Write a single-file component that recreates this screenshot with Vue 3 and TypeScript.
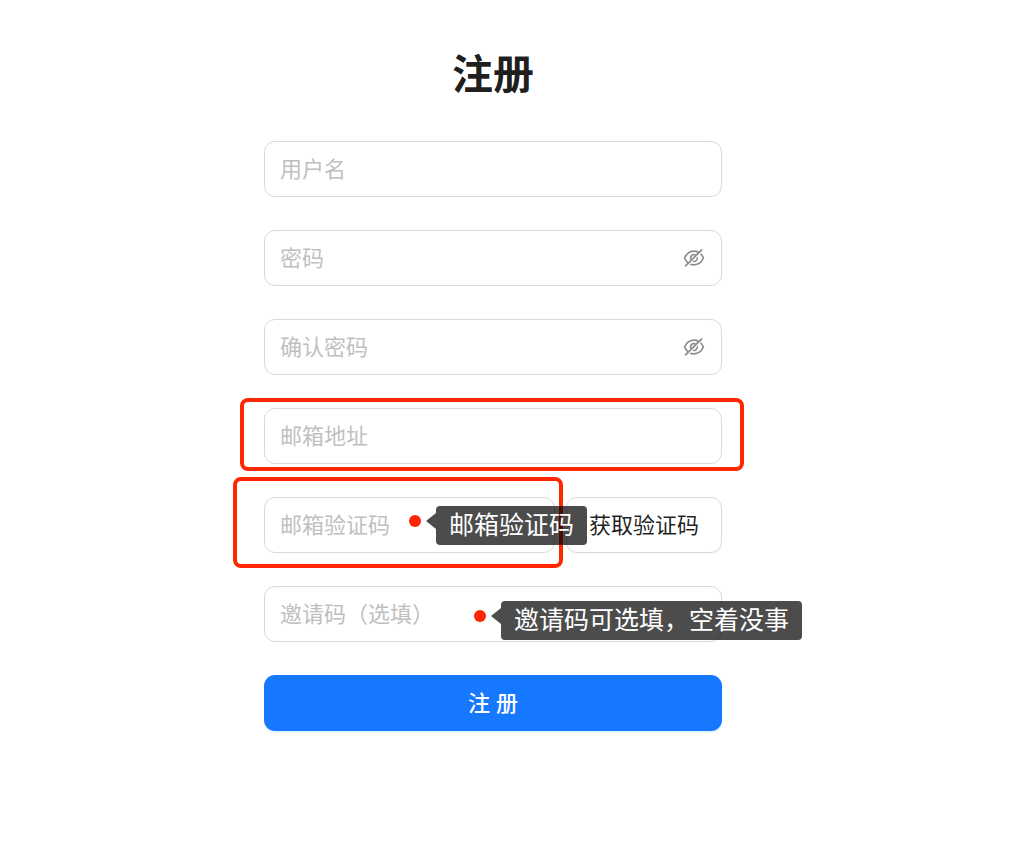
<script setup lang="ts">
import { reactive, ref } from 'vue'

const form = reactive({
  username: '',
  password: '',
  confirm: '',
  email: '',
  code: '',
  invite: '',
})

const passwordFields: { key: 'password' | 'confirm'; label: string }[] = [
  { key: 'password', label: '密码' },
  { key: 'confirm', label: '确认密码' },
]

const shown = ref({ password: false, confirm: false })
</script>

<template>
  <main class="page">
    <form class="form" @submit.prevent>
      <h1 class="title">注册</h1>

      <div class="row">
        <input v-model="form.username" class="field" type="text" placeholder="用户名" aria-label="用户名" />
      </div>

      <div v-for="f in passwordFields" :key="f.key" class="row field affix">
        <input
          v-model="form[f.key]"
          class="bare"
          :type="shown[f.key] ? 'text' : 'password'"
          :placeholder="f.label"
          :aria-label="f.label"
        />
        <button class="eye" type="button" aria-label="显示密码" @click="shown[f.key] = !shown[f.key]">
          <svg viewBox="0 0 1024 1024" fill="currentColor" aria-hidden="true">
            <path
              d="M942.2 486.2Q889.47 375.11 816.7 305l-50.88 50.88C807.31 395.53 843.45 447.4 874.7 512 791.5 684.2 673.4 766 512 766q-72.67 0-133.87-22.38L323 798.75Q408 838 512 838q288.3 0 430.2-300.3a60.29 60.29 0 000-51.5zm-63.57-320.64L836 122.88a8 8 0 00-11.32 0L715.31 232.2Q624.86 186 512 186q-288.3 0-430.2 300.3a60.3 60.3 0 000 51.5q56.69 119.4 136.5 191.41L112.48 835a8 8 0 000 11.31L155.17 889a8 8 0 0011.31 0l712.15-712.12a8 8 0 000-11.32zM149.3 512C232.6 339.8 350.7 258 512 258c54.54 0 104.13 9.36 149.12 28.39l-70.3 70.3a176 176 0 00-238.13 238.13l-83.42 83.42C223.1 637.49 183.3 582.28 149.3 512zm246.7 0a112.11 112.11 0 01146.2-106.69L401.31 546.2A112 112 0 01396 512z"
            />
            <path
              d="M508 624c-3.46 0-6.87-.16-10.25-.47l-52.82 52.82a176.09 176.09 0 00227.42-227.42l-52.82 52.82c.31 3.38.47 6.79.47 10.25a111.94 111.94 0 01-112 112z"
            />
          </svg>
        </button>
      </div>

      <div class="row">
        <input v-model="form.email" class="field" type="email" placeholder="邮箱地址" aria-label="邮箱地址" />
        <span class="frame frame-email"></span>
      </div>

      <div class="row split">
        <div class="row grow">
          <input v-model="form.code" class="field" type="text" placeholder="邮箱验证码" aria-label="邮箱验证码" />
          <span class="frame frame-code"></span>
        </div>
        <button class="field get-code" type="button">获取验证码</button>
        <div class="note note-code">
          <span class="dot"></span><span class="arrow"></span><span class="tip">邮箱验证码</span>
        </div>
      </div>

      <div class="row">
        <input v-model="form.invite" class="field" type="text" placeholder="邀请码（选填）" aria-label="邀请码（选填）" />
        <div class="note note-invite">
          <span class="dot"></span><span class="arrow"></span><span class="tip">邀请码可选填，空着没事</span>
        </div>
      </div>

      <button class="submit" type="submit">注 册</button>
    </form>
  </main>
</template>

<style>
body {
  margin: 0;
  background: #fff;
}
</style>

<style scoped>
.page,
.page * {
  box-sizing: border-box;
}

.page {
  display: flex;
  justify-content: center;
  padding: 45px 38px 44px 0;
  font-family: 'Liberation Sans', 'Noto Sans CJK SC', sans-serif;
  font-size: 22px;
  color: rgba(0, 0, 0, 0.88);
}

.form {
  display: flex;
  flex-direction: column;
  gap: 33px;
  width: 100%;
  max-width: 458px;
}

.title {
  margin: 0 0 3px;
  font-size: 41px;
  line-height: 60px;
  font-weight: 700;
  text-align: center;
}

.row {
  position: relative;
}

.field {
  display: block;
  width: 100%;
  height: 56px;
  padding: 2px 15px 0;
  border: 1px solid #d9d9d9;
  border-radius: 11px;
  background: #fff;
  font: inherit;
  color: inherit;
  outline: none;
}

.field:focus,
.field:focus-within {
  border-color: #1677ff;
}

.field::placeholder,
.bare::placeholder {
  color: #bfbfbf;
  opacity: 1;
}

.affix {
  display: flex;
  align-items: center;
  padding-top: 0;
}

.bare {
  flex: 1;
  min-width: 0;
  padding: 2px 0 0;
  border: 0;
  background: none;
  font: inherit;
  color: inherit;
  outline: none;
}

.eye {
  display: flex;
  padding: 0;
  border: 0;
  background: none;
  color: rgba(0, 0, 0, 0.45);
  cursor: pointer;
}

.eye svg {
  width: 24px;
  height: 24px;
}

.split {
  display: flex;
  gap: 11px;
}

.grow {
  flex: 1;
  min-width: 0;
}

.get-code {
  flex: none;
  width: auto;
  padding: 0 22px 4px;
  box-shadow: 0 2px 0 rgba(0, 0, 0, 0.02);
  white-space: nowrap;
  cursor: pointer;
}

.submit {
  height: 56px;
  padding: 0 22px 4px;
  border: 0;
  border-radius: 11px;
  background: #1677ff;
  box-shadow: 0 2px 0 rgba(5, 145, 255, 0.1);
  font: inherit;
  font-weight: 500;
  color: #fff;
  cursor: pointer;
}

.frame {
  position: absolute;
  border: 4px solid #ff2600;
  border-radius: 8px;
  pointer-events: none;
}

.frame-email {
  inset: -10px -22px -7px -24px;
}

.frame-code {
  inset: -20px -8px -15px -31px;
}

.note {
  position: absolute;
  z-index: 1;
  display: flex;
  align-items: flex-start;
  pointer-events: none;
}

.note-code {
  left: 145px;
  top: 9px;
}

.note-invite {
  left: 210px;
  top: 15px;
}

.dot {
  width: 12px;
  height: 12px;
  margin: 9px 5px 0 0;
  border-radius: 50%;
  background: #ff2600;
}

.arrow {
  width: 10px;
  height: 16px;
  margin-top: 7px;
  background: rgba(0, 0, 0, 0.7);
  clip-path: polygon(0 50%, 100% 0, 100% 100%);
}

.tip {
  padding: 0 13px;
  border-radius: 4px;
  background: rgba(0, 0, 0, 0.7);
  font-size: 25px;
  line-height: 39px;
  color: #fff;
  white-space: nowrap;
}
</style>
